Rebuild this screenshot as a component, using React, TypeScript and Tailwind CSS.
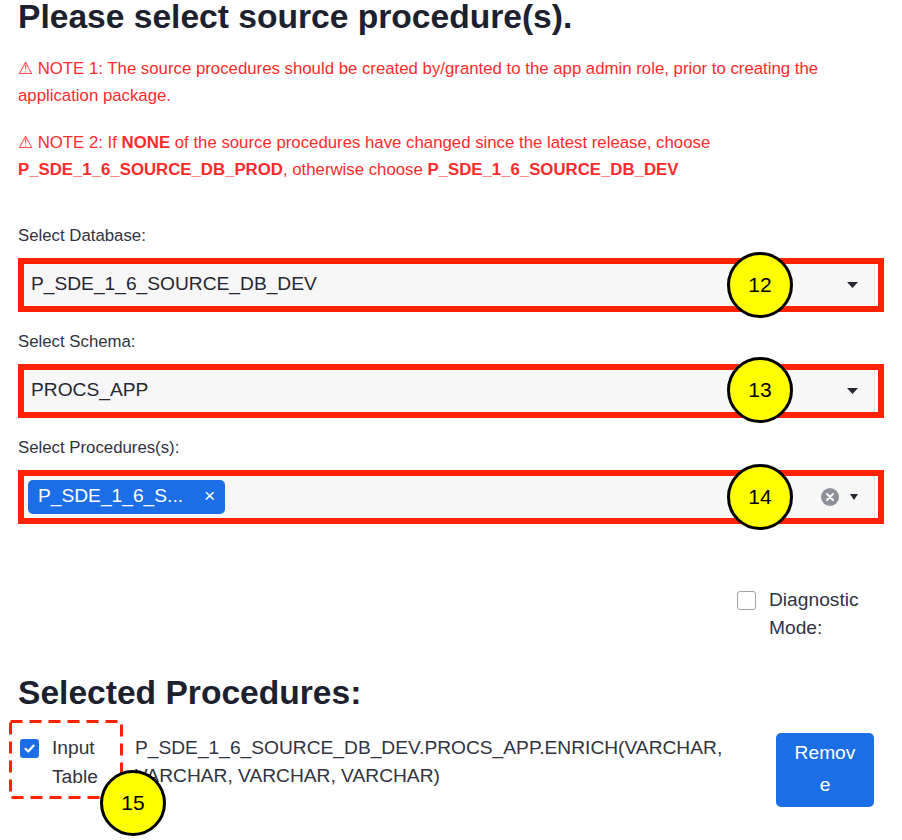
import React from "react";

function Caret({ w = 11 }: { w?: number }) {
  return (
    <svg width={w} height={6} viewBox={`0 0 ${w} 6`} className="block">
      <path d={`M0 0 L${w} 0 L${w / 2} 6 Z`} fill="#262730" />
    </svg>
  );
}

function SelectBox({ children, right }: { children: React.ReactNode; right: React.ReactNode }) {
  return (
    <div className="mt-[10.8px] flex h-[54px] border-[6px] border-[#ff2200] bg-white pr-[3px]">
      <div className="flex flex-1 items-center border-r border-[#e4e4e4] bg-[#f7f7f7] pr-[16px]">
        <div className="flex flex-1 items-center">{children}</div>
        {right}
      </div>
    </div>
  );
}

function Label({ children, first }: { children: React.ReactNode; first?: boolean }) {
  return (
    <div className={`${first ? "mt-[42.5px]" : "mt-[19.2px]"} text-[16.8px] leading-[22px] text-[#31333f]`}>
      {children}
    </div>
  );
}

function Badge({ n, left, top }: { n: number; left: number; top: number }) {
  return (
    <div
      className="absolute flex h-[66px] w-[66px] items-center justify-center rounded-full border-[3px] border-black bg-[#ffff00] text-[21px] text-black"
      style={{ left, top }}
    >
      {n}
    </div>
  );
}

export default function App() {
  return (
    <div className="relative h-[840px] w-[902px] overflow-hidden bg-white px-[18px] font-['Liberation_Sans',Arial,sans-serif]">
      <h1 className="text-[33.6px] font-bold leading-none text-[#1c2130]">
        Please select source procedure(s).
      </h1>
      <p className="mt-[21px] text-[16.8px] leading-[27px] text-[#ff2b2b]">
        ⚠ NOTE 1: The source procedures should be created by/granted to the app admin role, prior to creating the
        application package.
      </p>
      <p className="mt-[20px] text-[16.8px] leading-[27px] text-[#ff2b2b]">
        ⚠ NOTE 2: If <b>NONE</b> of the source procedures have changed since the latest release, choose{" "}
        <b>P_SDE_1_6_SOURCE_DB_PROD</b>, otherwise choose <b>P_SDE_1_6_SOURCE_DB_DEV</b>
      </p>

      <Label first>Select Database:</Label>
      <SelectBox right={<Caret />}>
        <span className="pl-[7px] text-[19.2px] text-[#262730]">P_SDE_1_6_SOURCE_DB_DEV</span>
      </SelectBox>

      <Label>Select Schema:</Label>
      <SelectBox right={<Caret />}>
        <span className="pl-[7px] text-[19.2px] text-[#262730]">PROCS_APP</span>
      </SelectBox>

      <Label>Select Procedures(s):</Label>
      <SelectBox
        right={
          <div className="flex items-center gap-[11px]">
            <svg width="18" height="18" viewBox="0 0 18 18" className="block">
              <circle cx="9" cy="9" r="9" fill="#8d8f99" />
              <path d="M6 6 L12 12 M12 6 L6 12" stroke="white" strokeWidth="2" strokeLinecap="round" />
            </svg>
            <Caret w={8} />
          </div>
        }
      >
        <div className="ml-[4px] flex h-[34px] items-center rounded-[5px] bg-[#1b6ee6] pl-[10px] pr-[10px] text-[19.2px] text-white">
          <span>P_SDE_1_6_S...</span>
          <span className="ml-[21px]">×</span>
        </div>
      </SelectBox>

      <div className="mt-[62px] flex justify-end">
        <div className="flex w-[147px] gap-[13px]">
          <div className="mt-[5px] h-[19px] w-[19px] shrink-0 rounded-[3px] border-[1.5px] border-[#a3a3a8] bg-white" />
          <div className="text-[19.2px] leading-[28px] text-[#31333f]">Diagnostic Mode:</div>
        </div>
      </div>

      <h2 className="mt-[34.5px] text-[33.6px] font-bold leading-none text-[#1c2130]">Selected Procedures:</h2>

      <div className="mt-[23px] flex">
        <div className="flex w-[117px] shrink-0 gap-[13px] pl-[2px]">
          <div className="mt-[6px] flex h-[19px] w-[19px] shrink-0 items-center justify-center rounded-[3px] bg-[#1b6ee6]">
            <svg width="13" height="13" viewBox="0 0 13 13" className="block">
              <path d="M2.5 6.8 L5.3 9.5 L10.6 3.6" stroke="white" strokeWidth="2.2" fill="none" strokeLinecap="round" strokeLinejoin="round" />
            </svg>
          </div>
          <div className="w-[71px] text-[19.2px] leading-[29px] text-[#31333f]">Input Table</div>
        </div>
        <div className="flex-1 pt-[1px] text-[19.2px] leading-[28px] text-[#31333f]">
          P_SDE_1_6_SOURCE_DB_DEV.PROCS_APP.ENRICH(VARCHAR, VARCHAR, VARCHAR, VARCHAR)
        </div>
        <button className="mr-[10px] ml-[10px] w-[98px] shrink-0 self-start break-all rounded-[5px] bg-[#1b6ee6] px-[16px] pb-[6px] pt-[4px] text-center text-[19.2px] leading-[32px] text-white">
          Remove
        </button>
      </div>

      <svg className="absolute left-[9px] top-[720px]" width="114" height="79" viewBox="0 0 114 79">
        <rect x="1.5" y="1.5" width="111" height="76" fill="none" stroke="#ff2200" strokeWidth="3" strokeDasharray="12 7" />
      </svg>

      <Badge n={12} left={727} top={252} />
      <Badge n={13} left={727} top={357} />
      <Badge n={14} left={727} top={464} />
      <Badge n={15} left={100} top={770} />
    </div>
  );
}
